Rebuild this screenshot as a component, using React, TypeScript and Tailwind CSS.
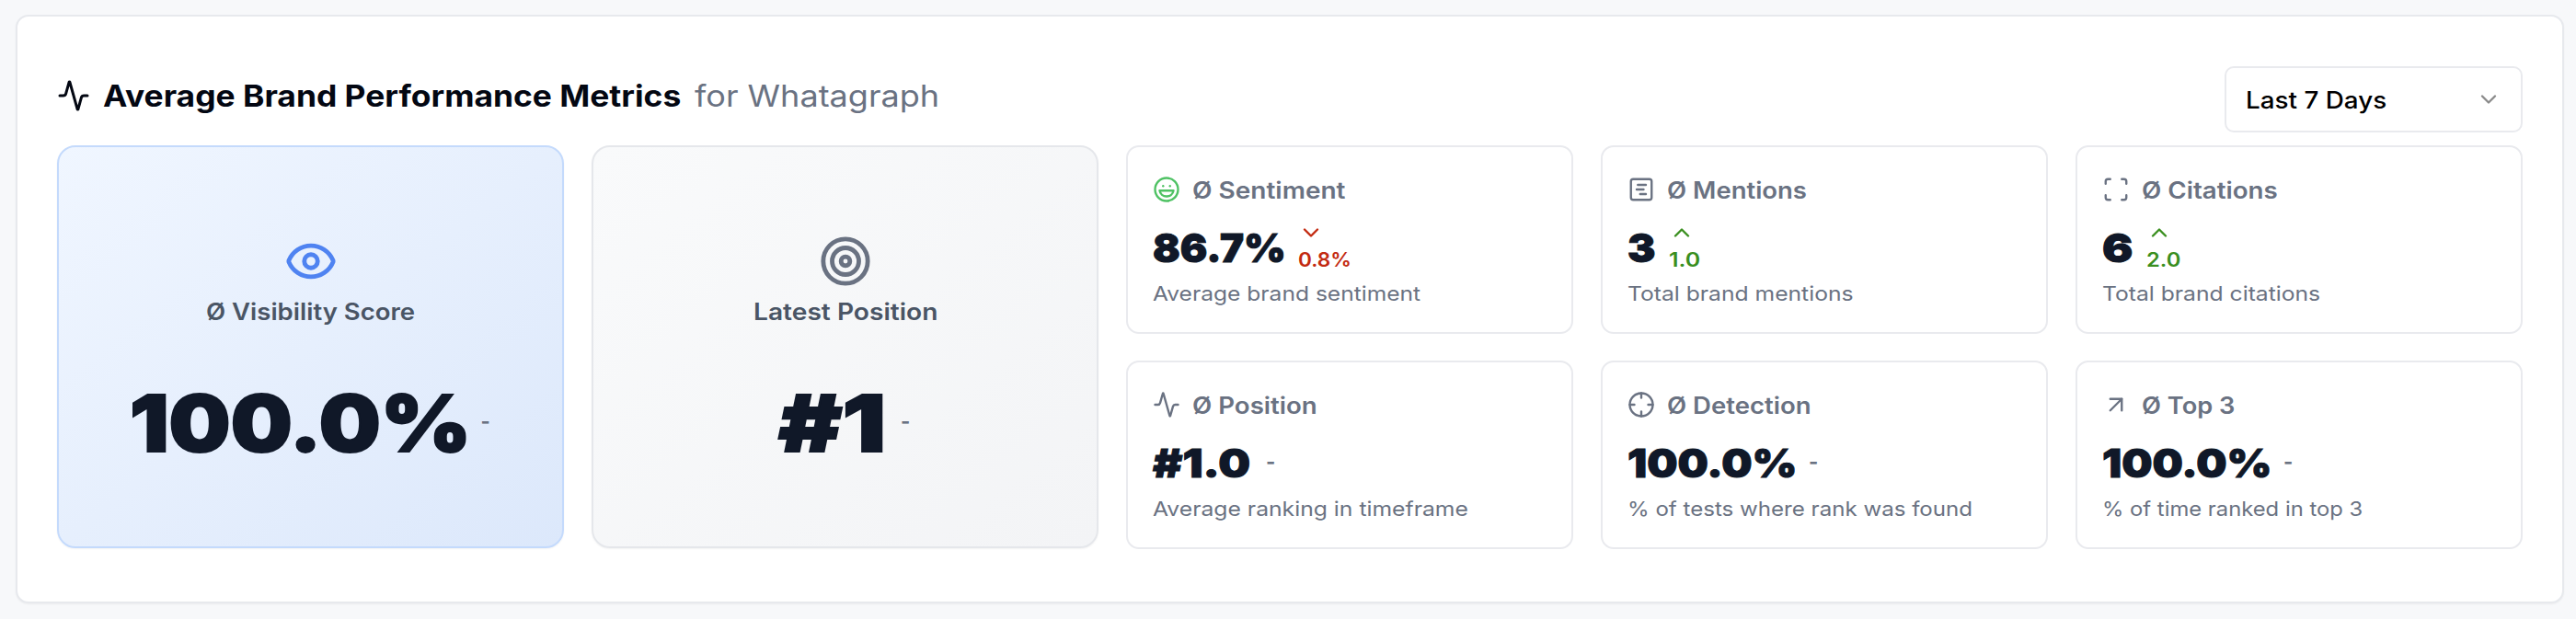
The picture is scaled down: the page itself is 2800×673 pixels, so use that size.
import type { ReactNode } from "react";
import {
  Activity,
  ArrowUpRight,
  ChevronDown,
  ChevronUp,
  Crosshair,
  Eye,
  Laugh,
  Scan,
  SquareChartGantt,
  Target,
  type LucideIcon,
} from "lucide-react";

type Metric = {
  icon: LucideIcon;
  iconClass?: string;
  label: string;
  labelClass: string;
  value: string;
  valueBox: string;
  valueClass: string;
  trend?: "up" | "down";
  change?: string;
  changeClass?: string;
  description: string;
  descriptionClass: string;
};

const metrics: Metric[] = [
  {
    icon: Laugh,
    iconClass: "text-[#4fc264]",
    label: "Ø Sentiment",
    labelClass: "scale-x-[1.12]",
    value: "86.7%",
    valueBox: "w-[158px]",
    valueClass: "scale-x-[1.02]",
    trend: "down",
    change: "0.8%",
    changeClass: "scale-x-[1.05]",
    description: "Average brand sentiment",
    descriptionClass: "scale-x-[1.117]",
  },
  {
    icon: SquareChartGantt,
    label: "Ø Mentions",
    labelClass: "scale-x-[1.099]",
    value: "3",
    valueBox: "w-[45px]",
    valueClass: "scale-x-[1.06]",
    trend: "up",
    change: "1.0",
    changeClass: "scale-x-[1.16]",
    description: "Total brand mentions",
    descriptionClass: "scale-x-[1.121]",
  },
  {
    icon: Scan,
    label: "Ø Citations",
    labelClass: "scale-x-[1.107]",
    value: "6",
    valueBox: "w-[48px]",
    valueClass: "scale-x-[1.15]",
    trend: "up",
    change: "2.0",
    changeClass: "scale-x-[1.105]",
    description: "Total brand citations",
    descriptionClass: "scale-x-[1.121]",
  },
  {
    icon: Activity,
    label: "Ø Position",
    labelClass: "scale-x-[1.105]",
    value: "#1.0",
    valueBox: "w-[123px]",
    valueClass: "scale-x-[1.14]",
    description: "Average ranking in timeframe",
    descriptionClass: "scale-x-[1.123]",
  },
  {
    icon: Crosshair,
    label: "Ø Detection",
    labelClass: "scale-x-[1.101]",
    value: "100.0%",
    valueBox: "w-[197px]",
    valueClass: "scale-x-[1.09]",
    description: "% of tests where rank was found",
    descriptionClass: "scale-x-[1.095]",
  },
  {
    icon: ArrowUpRight,
    label: "Ø Top 3",
    labelClass: "scale-x-[1.089]",
    value: "100.0%",
    valueBox: "w-[197px]",
    valueClass: "scale-x-[1.09]",
    description: "% of time ranked in top 3",
    descriptionClass: "scale-x-[1.082]",
  },
];

// Text set slightly wider than the font's natural width
function Wide({ className, children }: { className: string; children: ReactNode }) {
  return <span className={`inline-block origin-left whitespace-nowrap ${className}`}>{children}</span>;
}

function MetricCard({ metric }: { metric: Metric }) {
  const Icon = metric.icon;
  const TrendIcon = metric.trend === "up" ? ChevronUp : ChevronDown;
  const trendColor = metric.trend === "up" ? "text-[#3a8f1f]" : "text-[#c32a10]";

  return (
    <div className="h-[205px] rounded-[14px] border-2 border-[#e9eaee] bg-white px-[27px] pt-[31px]">
      <div className="flex h-[30px] items-center gap-[13px] text-gray-500">
        <Icon size={30} strokeWidth={1.9} className={`shrink-0 ${metric.iconClass ?? ""}`} />
        <Wide className={`pt-0.5 text-[25px] leading-7 font-semibold ${metric.labelClass}`}>{metric.label}</Wide>
      </div>
      <div className="mt-[18px] flex h-[59px] items-center">
        <div className={`shrink-0 ${metric.valueBox}`}>
          <Wide
            className={`text-[43px] leading-[56px] font-black text-gray-900 [-webkit-text-stroke:1px] ${metric.valueClass}`}
          >
            {metric.value}
          </Wide>
        </div>
        {metric.trend ? (
          <div className={`flex flex-col items-start ${trendColor}`}>
            <TrendIcon size={28} strokeWidth={2} />
            <Wide className={`text-[21.5px] leading-[31px] font-semibold ${metric.changeClass}`}>{metric.change}</Wide>
          </div>
        ) : (
          <span className="text-[22px] font-bold text-gray-500">-</span>
        )}
      </div>
      <p className="mt-1.5 text-[22px] leading-[30px] text-gray-500">
        <Wide className={metric.descriptionClass}>{metric.description}</Wide>
      </p>
    </div>
  );
}

export default function App() {
  return (
    <div className="h-[673px] w-[2800px] bg-[#f7f8fa] pt-4 pr-[13px] pl-[17px] font-['Inter',sans-serif]">
      <section className="h-[640px] rounded-[14px] border-2 border-[#e7e9ed] bg-white px-[43px] pt-[54px] shadow-xs">
        {/* Header */}
        <div className="flex h-[72px] items-start justify-between">
          <div className="flex h-16 items-center">
            <Activity size={36} strokeWidth={2} className="mr-3.5 text-gray-950" />
            <h2 className="w-[643px] text-[32px] font-bold text-gray-950">
              <Wide className="mt-px scale-x-[1.106]">Average Brand Performance Metrics</Wide>
            </h2>
            <Wide className="mt-px scale-x-[1.126] text-[32px] text-gray-500">for Whatagraph</Wide>
          </div>
          <button className="flex h-[72px] w-[324px] items-center justify-between rounded-[10px] border-2 border-[#e9eaee] bg-white px-[21px]">
            <Wide className="mt-[3px] scale-x-[1.091] text-[25.5px] font-medium text-black">Last 7 Days</Wide>
            <ChevronDown size={28} strokeWidth={2} className="text-[#8a8a8a]" />
          </button>
        </div>

        <div className="mt-3.5 flex gap-[30px]">
          {/* Headline numbers */}
          <div className="flex h-[438px] w-[551px] flex-col items-center rounded-[20px] border-2 border-[#c4dafc] bg-linear-to-br from-[#f0f6ff] to-[#dce8fb] pt-[95px] shadow-xs">
            <Eye size={58} strokeWidth={2} className="text-[#4f83f1]" />
            <div className="mt-2 w-[227px] text-[25.5px] leading-9 font-semibold text-gray-600">
              <Wide className="scale-x-[1.079]">Ø Visibility Score</Wide>
            </div>
            <div className="mt-[59px] flex h-[90px] items-center gap-[9px]">
              <div className="w-[373px] text-[85px] leading-[90px] font-black text-gray-900 [-webkit-text-stroke:2px]">
                <Wide className="scale-x-[1.109]">100.0%</Wide>
              </div>
              <span className="mb-1.5 w-3 text-[22px] font-bold text-gray-500">-</span>
            </div>
          </div>

          <div className="flex h-[438px] w-[551px] flex-col items-center rounded-[20px] border-2 border-[#e5e7eb] bg-linear-to-br from-[#f9fafb] to-[#f3f4f6] pt-[95px] shadow-xs">
            <Target size={58} strokeWidth={2} className="text-gray-500" />
            <div className="mt-2 w-[200px] text-[25.5px] leading-9 font-semibold text-gray-600">
              <Wide className="scale-x-[1.104]">Latest Position</Wide>
            </div>
            <div className="mt-[59px] flex h-[90px] items-center gap-3">
              <div className="w-[121px] text-[85px] leading-[90px] font-black text-gray-900 [-webkit-text-stroke:2px]">
                <Wide className="scale-x-[1.235]">#1</Wide>
              </div>
              <span className="mb-1.5 w-3 text-[22px] font-bold text-gray-500">-</span>
            </div>
          </div>

          {/* Detail grid */}
          <div className="grid flex-1 grid-cols-3 gap-x-[30px] gap-y-[29px]">
            {metrics.map((metric) => (
              <MetricCard key={metric.label} metric={metric} />
            ))}
          </div>
        </div>
      </section>
    </div>
  );
}
